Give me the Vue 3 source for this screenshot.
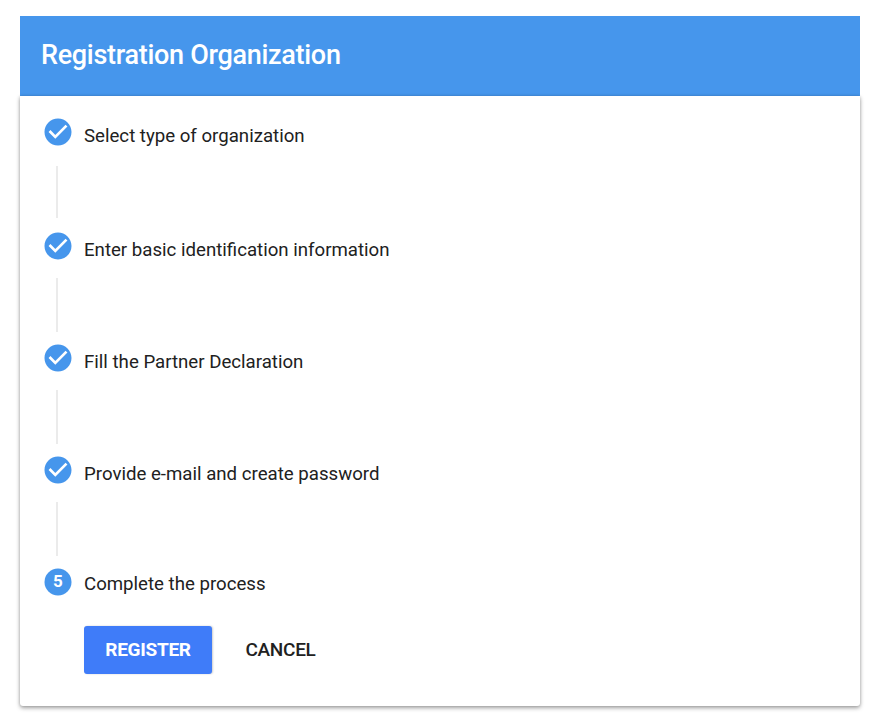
<script setup>
const steps = [
  'Select type of organization',
  'Enter basic identification information',
  'Fill the Partner Declaration',
  'Provide e-mail and create password',
  'Complete the process',
]
</script>

<template>
  <main class="page">
    <header class="header"><h1>Registration Organization</h1></header>
    <section class="card">
      <ol class="steps">
        <li v-for="(label, i) in steps" :key="label" class="step">
          <div class="rail">
            <svg v-if="i < 4" class="icon" viewBox="1.63 1.63 20.74 20.74">
              <path fill="#4696ec" d="M12 2C6.48 2 2 6.48 2 12s4.48 10 10 10 10-4.48 10-10S17.52 2 12 2zm-2 15l-5-5 1.41-1.41L10 14.17l7.59-7.59L19 8l-9 9z" />
            </svg>
            <svg v-else class="icon" viewBox="0 0 28 28">
              <circle cx="14" cy="14" r="13.5" fill="#4696ec" />
              <text class="number" x="14" y="19" text-anchor="middle">{{ i + 1 }}</text>
            </svg>
            <span v-if="i < 4" class="line"></span>
          </div>
          <span class="label">{{ label }}</span>
        </li>
      </ol>
      <div class="actions">
        <button class="register">REGISTER</button>
        <button class="cancel">CANCEL</button>
      </div>
    </section>
  </main>
</template>

<style>
body { margin: 0; background: #fff; }
</style>

<style scoped>
.page { box-sizing: border-box; height: 718px; padding: 16px 16px 12px 20px; font-family: Roboto, sans-serif; color: #212121; }
.header { height: 80px; box-sizing: border-box; padding: 22px 21px; background: #4696ec; color: #fff; }
h1 { margin: 0; font-size: 27px; line-height: 34px; font-weight: 500; letter-spacing: -0.3px; white-space: nowrap; }
.card { box-sizing: border-box; height: 610px; padding: 22px 24px; border-radius: 0 0 3px 3px; background: #fff; box-shadow: 0 2px 4px rgba(0,0,0,.36), 0 0 3px rgba(0,0,0,.15); }
.steps { margin: 0; padding: 0; list-style: none; }
.step { display: flex; height: 112px; gap: 12px; }
.step:first-child { height: 114px; }
.step:last-child { height: 28px; }
.rail { display: flex; flex-direction: column; width: 28px; }
.icon { display: block; width: 28px; height: 28px; }
.number { fill: #fff; font-size: 17px; font-weight: 700; }
.line { width: 2px; height: 54px; margin: 18px 0 0 12px; background: #ebebeb; }
.step:first-child .line { height: 52px; margin-top: 20px; }
.label { font-size: 18.65px; line-height: 28px; padding-top: 4px; white-space: nowrap; }
.step:last-child .label { padding-top: 2px; }
.actions { display: flex; margin: 30px 0 0 40px; }
button { height: 48px; padding: 0; border: 0; border-radius: 3px; font: 500 19px/48px Roboto, sans-serif; letter-spacing: -.3px; }
.register { width: 128px; background: #3f7cf9; color: #fff; font-weight: 700; box-shadow: 1px 0 2px rgba(0,0,0,.2); }
.cancel { width: 104px; margin-left: 16.5px; background: transparent; color: #212121; }
</style>
